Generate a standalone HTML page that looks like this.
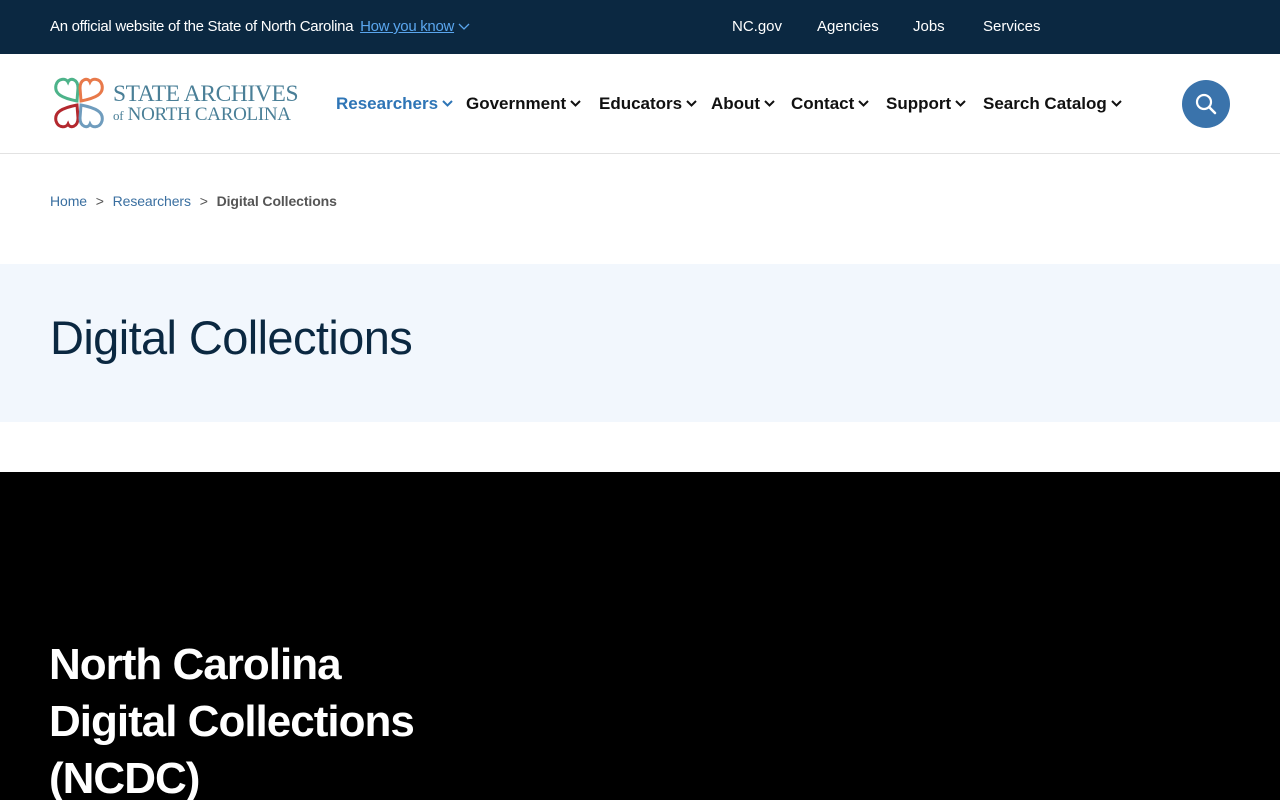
<!DOCTYPE html>
<html><head><meta charset="utf-8"><style>
*{margin:0;padding:0;box-sizing:border-box}
body{width:1280px;height:800px;overflow:hidden;font-family:"Liberation Sans",sans-serif;background:#fff;position:relative}
.abs{position:absolute;white-space:nowrap}
.top{position:absolute;left:0;top:0;width:1280px;height:54px;background:#0b2841;color:#fff;font-size:15px}
.nav{font-size:17px;font-weight:bold;color:#111;top:94px}
.nav svg{margin-left:4px;vertical-align:2px}
</style></head><body>
<div class="top">
<div class="abs" style="left:50px;top:18px;letter-spacing:-0.3px">An official website of the State of North Carolina <span style="color:#5aa6ee;text-decoration:underline;margin-left:3px">How you know</span> <svg width="12" height="8" viewBox="0 0 12 8"><path d="M1 1l5 5 5-5" fill="none" stroke="#5aa6ee" stroke-width="1.3"/></svg></div>
<div class="abs" style="left:732px;top:18px">NC.gov</div>
<div class="abs" style="left:817px;top:18px">Agencies</div>
<div class="abs" style="left:913px;top:18px">Jobs</div>
<div class="abs" style="left:983px;top:18px">Services</div>
</div>
<svg class="abs" style="left:52px;top:76px" width="54" height="54" viewBox="0 0 54 54">
<path d="M25 25 C10 22 2 18 4 9 C6 2 14 2 16 6 C18 1 26 3 26 12 Z" fill="none" stroke="#4db38a" stroke-width="3"/>
<path d="M29 25 C44 22 52 18 50 9 C48 2 40 2 38 6 C36 1 28 3 28 12 Z" fill="none" stroke="#e8794a" stroke-width="3"/>
<path d="M25 29 C10 32 2 36 4 45 C6 52 14 52 16 48 C18 53 26 51 26 42 Z" fill="none" stroke="#b3282e" stroke-width="3"/>
<path d="M29 29 C44 32 52 36 50 45 C48 52 40 52 38 48 C36 53 28 51 28 42 Z" fill="none" stroke="#6f9cbd" stroke-width="3"/>
</svg>
<div class="abs" style="left:113px;top:81px;font-family:'Liberation Serif',serif;color:#4a7f97;font-size:23.5px;letter-spacing:-0.4px">STATE ARCHIVES</div>
<div class="abs" style="left:113px;top:104px;font-family:'Liberation Serif',serif;color:#4a7f97;font-size:19px;letter-spacing:-0.3px"><span style="font-size:13px">of</span> NORTH CAROLINA</div>
<div class="abs nav" style="left:336px;color:#2e75b6">Researchers<svg width="11" height="7" viewBox="0 0 11 7"><path d="M1 1l4.5 4.5L10 1" fill="none" stroke="#2e75b6" stroke-width="2"/></svg></div>
<div class="abs nav" style="left:466px">Government<svg width="11" height="7" viewBox="0 0 11 7"><path d="M1 1l4.5 4.5L10 1" fill="none" stroke="#111" stroke-width="2"/></svg></div>
<div class="abs nav" style="left:599px">Educators<svg width="11" height="7" viewBox="0 0 11 7"><path d="M1 1l4.5 4.5L10 1" fill="none" stroke="#111" stroke-width="2"/></svg></div>
<div class="abs nav" style="left:711px">About<svg width="11" height="7" viewBox="0 0 11 7"><path d="M1 1l4.5 4.5L10 1" fill="none" stroke="#111" stroke-width="2"/></svg></div>
<div class="abs nav" style="left:791px">Contact<svg width="11" height="7" viewBox="0 0 11 7"><path d="M1 1l4.5 4.5L10 1" fill="none" stroke="#111" stroke-width="2"/></svg></div>
<div class="abs nav" style="left:886px">Support<svg width="11" height="7" viewBox="0 0 11 7"><path d="M1 1l4.5 4.5L10 1" fill="none" stroke="#111" stroke-width="2"/></svg></div>
<div class="abs nav" style="left:983px">Search Catalog<svg width="11" height="7" viewBox="0 0 11 7"><path d="M1 1l4.5 4.5L10 1" fill="none" stroke="#111" stroke-width="2"/></svg></div>
<div class="abs" style="left:1182px;top:80px;width:48px;height:48px;border-radius:50%;background:#3a73ab"></div>
<svg class="abs" style="left:1194px;top:92px" width="24" height="24" viewBox="0 0 24 24"><circle cx="10" cy="10" r="7" fill="none" stroke="#fff" stroke-width="2.2"/><path d="M15 15l6 6" stroke="#fff" stroke-width="2.6" stroke-linecap="round"/></svg>
<div class="abs" style="left:0;top:153px;width:1280px;height:1px;background:#e2e2e2"></div>
<div class="abs" style="left:50px;top:193px;font-size:14px;color:#3a6fa0;letter-spacing:-0.1px">Home <span style="color:#555;margin:0 5px">&gt;</span> Researchers <span style="color:#555;margin:0 5px">&gt;</span> <b style="color:#555">Digital Collections</b></div>
<div class="abs" style="left:0;top:264px;width:1280px;height:158px;background:#f2f7fd"></div>
<div class="abs" style="left:50px;top:310px;font-size:47px;color:#0b2841;letter-spacing:-0.6px">Digital Collections</div>
<div class="abs" style="left:0;top:472px;width:1280px;height:328px;background:#000"></div>
<div class="abs" style="left:49px;top:636px;font-size:44px;line-height:57px;font-weight:bold;color:#fff;letter-spacing:-1px;white-space:normal;width:420px">North Carolina Digital Collections (NCDC)</div>
</body></html>
